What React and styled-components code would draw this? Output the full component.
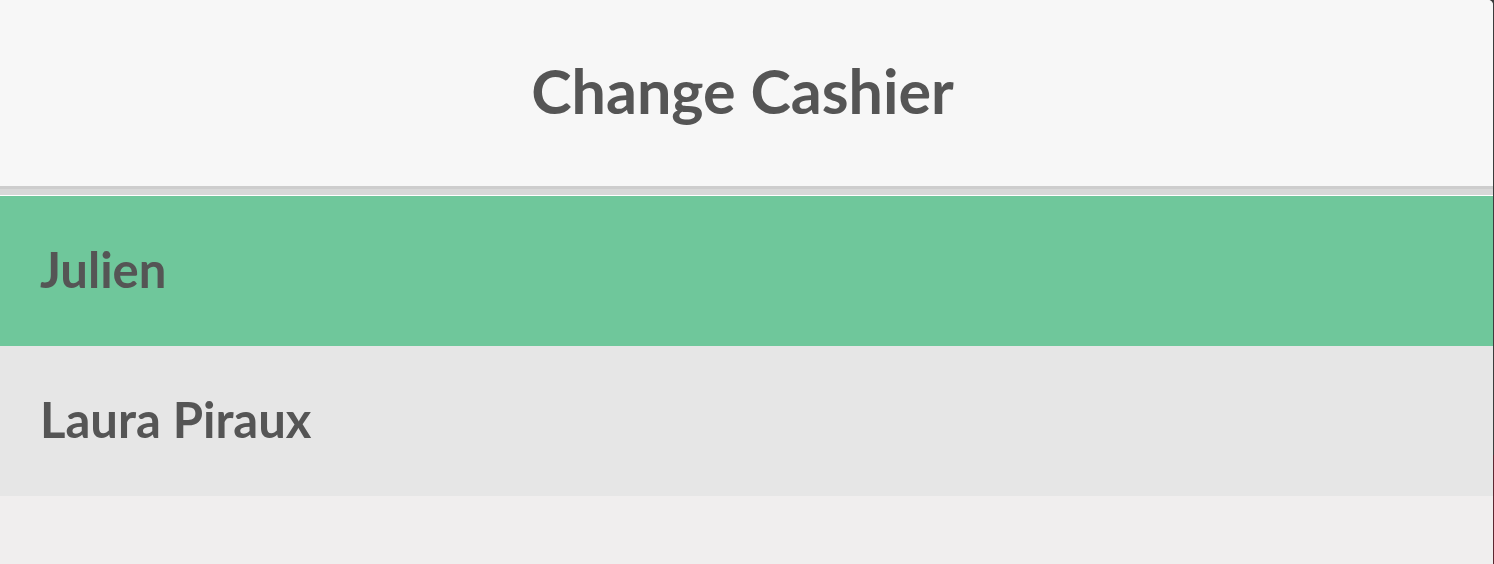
import React from 'react';
import styled, { createGlobalStyle } from 'styled-components';

const GlobalStyle = createGlobalStyle`
  html, body {
    margin: 0;
    padding: 0;
    height: 100%;
  }
  body {
    font-family: Lato, 'Open Sans', sans-serif;
    overflow: hidden;
  }
  #root {
    height: 100%;
  }
`;

const cashiers = [
  { name: 'Julien', selected: true },
  { name: 'Laura Piraux', selected: false },
];

const App = () => {
  return (
    <Screen>
      <GlobalStyle />
      <Panel>
        <Header>
          <Title>Change Cashier</Title>
        </Header>
        <Divider />
        <List>
          {cashiers.map((c, i) => (
            <Row key={i} $selected={c.selected}>
              <Name>{c.name}</Name>
            </Row>
          ))}
        </List>
      </Panel>
    </Screen>
  );
};

const Screen = styled.div`
  height: 100%;
  display: flex;
  background: linear-gradient(#3c3c3c 0 455px, #5b2831 455px);
`;

const Panel = styled.div`
  flex: 1;
  margin-right: 1px;
  display: flex;
  flex-direction: column;
  background: #f0eeee;
  border-top-right-radius: 5px;
  overflow: hidden;
`;

const Header = styled.header`
  height: 189px;
  box-sizing: border-box;
  display: flex;
  align-items: center;
  justify-content: center;
  background: #f7f7f7;
  border-bottom: 3px solid #cdcdcd;
`;

const Title = styled.h1`
  margin: 0 0 6px;
  font-size: 61px;
  font-weight: 700;
  color: #555555;
  padding-right: 8px;
`;

const Divider = styled.div`
  height: 6px;
  background: #d8d8d8;
  border-bottom: 1px solid #ffffff;
`;

const List = styled.ul`
  list-style: none;
  margin: 0;
  padding: 0;
`;

const Row = styled.li`
  height: 150px;
  display: flex;
  align-items: center;
  padding-left: 40px;
  background: ${({ $selected }) => ($selected ? '#6fc79b' : '#e6e6e6')};
`;

const Name = styled.span`
  font-size: 49px;
  font-weight: 700;
  color: #555555;
  margin-top: -4px;
`;

export default App;
